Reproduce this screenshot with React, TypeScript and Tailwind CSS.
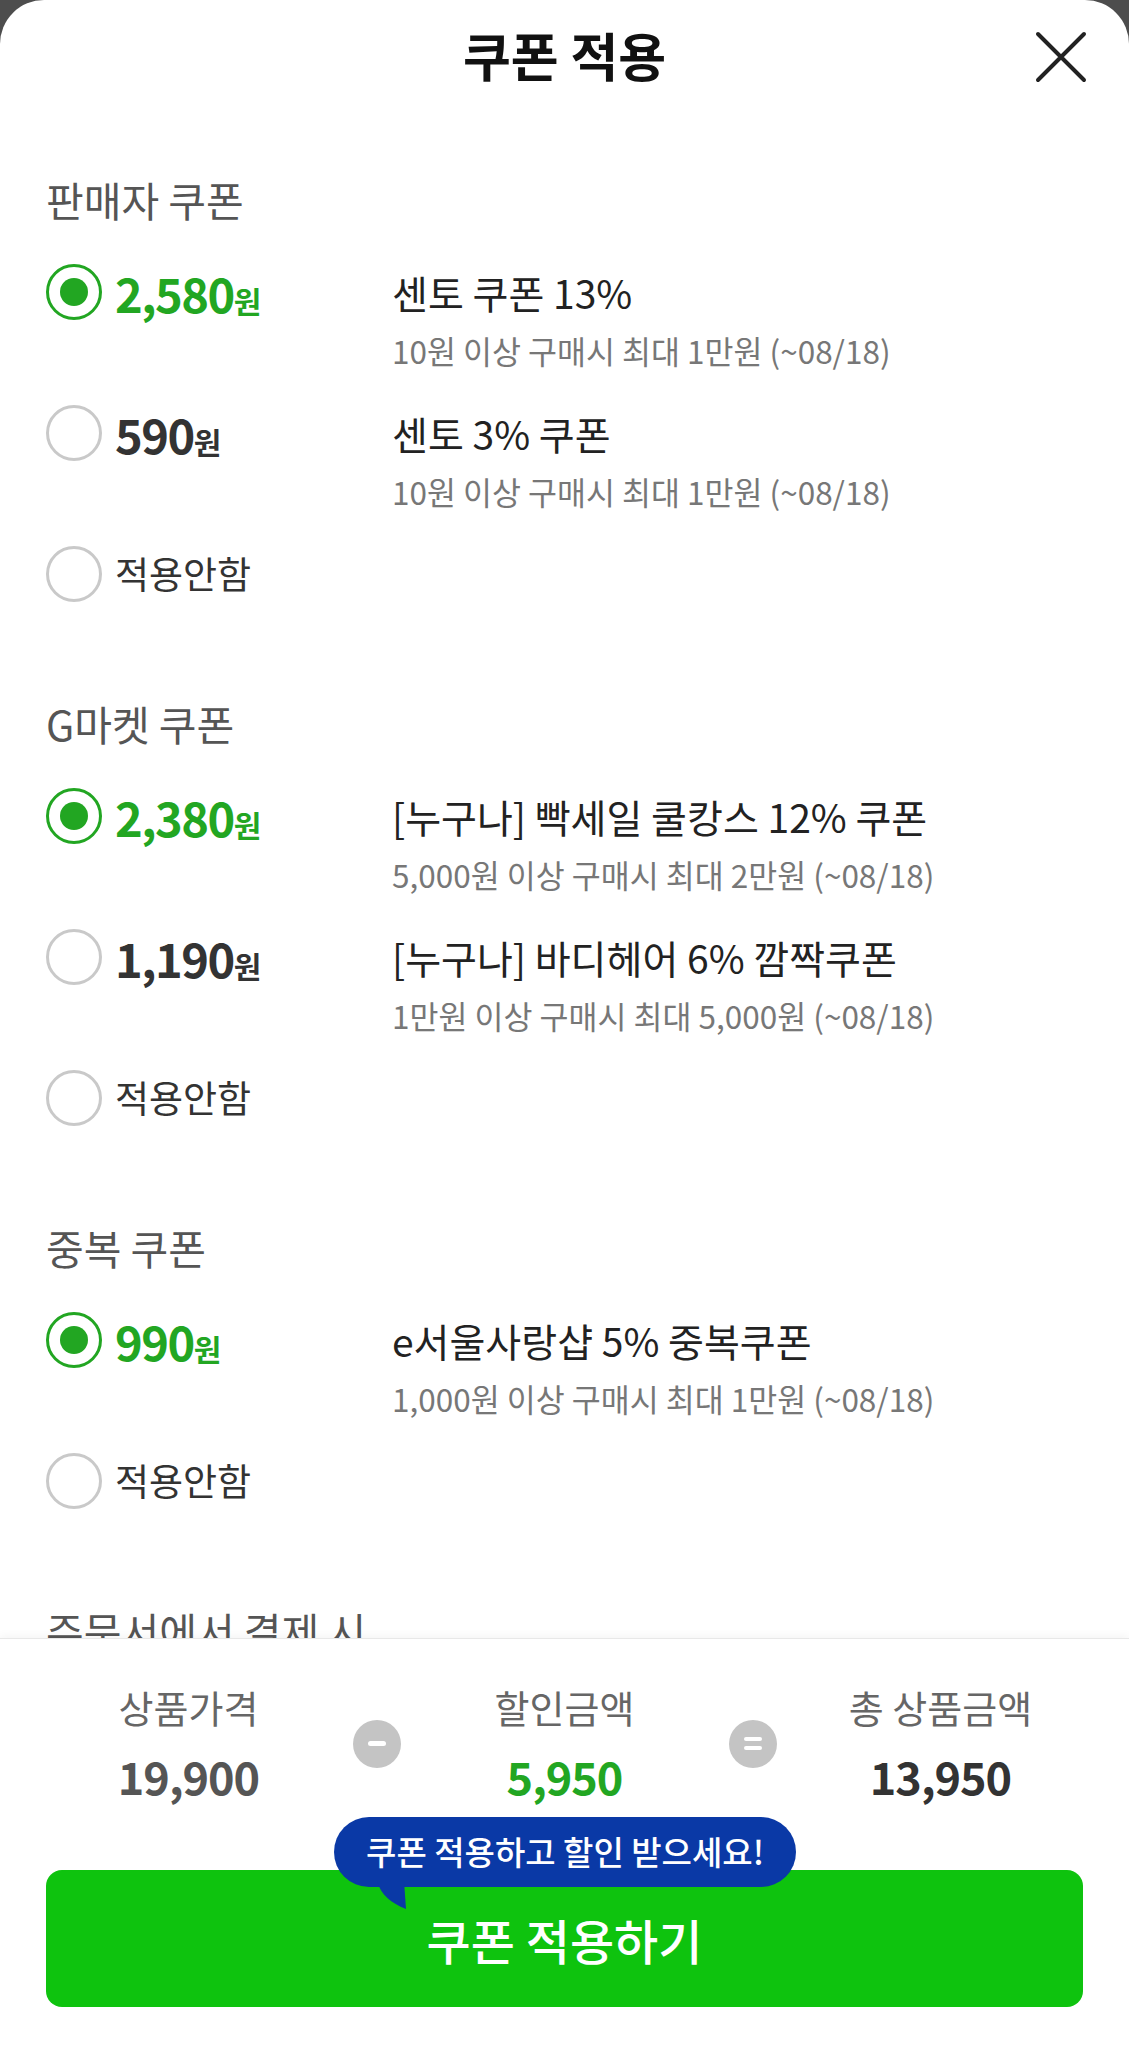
import React from "react";

interface CouponItem {
  amount: string;
  checked?: boolean;
  name: string;
  desc: string;
}

interface CouponSection {
  title: string;
  items: CouponItem[];
}

const SECTIONS: CouponSection[] = [
  {
    title: "판매자 쿠폰",
    items: [
      { amount: "2,580", checked: true, name: "센토 쿠폰 13%", desc: "10원 이상 구매시 최대 1만원 (~08/18)" },
      { amount: "590", name: "센토 3% 쿠폰", desc: "10원 이상 구매시 최대 1만원 (~08/18)" },
    ],
  },
  {
    title: "G마켓 쿠폰",
    items: [
      { amount: "2,380", checked: true, name: "[누구나] 빡세일 쿨캉스 12% 쿠폰", desc: "5,000원 이상 구매시 최대 2만원 (~08/18)" },
      { amount: "1,190", name: "[누구나] 바디헤어 6% 깜짝쿠폰", desc: "1만원 이상 구매시 최대 5,000원 (~08/18)" },
    ],
  },
  {
    title: "중복 쿠폰",
    items: [{ amount: "990", checked: true, name: "e서울사랑샵 5% 중복쿠폰", desc: "1,000원 이상 구매시 최대 1만원 (~08/18)" }],
  },
];

function Radio({ checked }: { checked?: boolean }) {
  if (checked) {
    return (
      <span className="flex h-[56px] w-[56px] shrink-0 items-center justify-center rounded-full border-[3px] border-[#22a622]">
        <span className="h-[28px] w-[28px] rounded-full bg-[#22a622]" />
      </span>
    );
  }
  return <span className="h-[56px] w-[56px] shrink-0 rounded-full border-[3px] border-[#c9c9c9]" />;
}

function CouponRow({ item }: { item: CouponItem }) {
  return (
    <div className="flex items-start">
      <div className="flex h-[60px] w-[346px] shrink-0 items-center">
        <Radio checked={item.checked} />
        <span className={`ml-[13px] flex items-baseline font-bold ${item.checked ? "text-[#22a622]" : "text-[#333]"}`}>
          <span className="text-[47px] leading-none tracking-[-1.5px]">{item.amount}</span>
          <span className="text-[30px] leading-none">원</span>
        </span>
      </div>
      <div>
        <p className="text-[39px] leading-[60px] text-[#222]">{item.name}</p>
        <p className="mt-[8px] text-[31.5px] leading-[40px] text-[#777]">{item.desc}</p>
      </div>
    </div>
  );
}

function NoneRow() {
  return (
    <div className="flex h-[60px] items-center">
      <Radio />
      <span className="ml-[13px] text-[37px] text-[#333]">적용안함</span>
    </div>
  );
}

export default function App() {
  return (
    <div className="h-[2046px] w-[1129px] bg-[#4d4d4d]">
      <div className="flex h-full flex-col overflow-hidden rounded-t-[44px] bg-white font-['Noto_Sans_CJK_KR','Noto_Sans',sans-serif]">
        <header className="relative flex h-[110px] shrink-0 items-center justify-center">
          <h1 className="text-[52px] font-bold text-[#111]">쿠폰 적용</h1>
          <button className="absolute right-[42px] top-[31px] h-[52px] w-[52px]" aria-label="닫기">
            <svg viewBox="0 0 52 52" className="h-full w-full" fill="none" stroke="#222" strokeWidth="4" strokeLinecap="round">
              <path d="M3 3 L49 49 M49 3 L3 49" />
            </svg>
          </button>
        </header>

        <main className="flex flex-1 flex-col gap-[94px] overflow-hidden px-[46px] pt-[64px]">
          {SECTIONS.map((section) => (
            <section key={section.title}>
              <h2 className="text-[41px] leading-[50px] text-[#555]">{section.title}</h2>
              <div className="mt-[38px] flex flex-col gap-[33px]">
                {section.items.map((item) => (
                  <CouponRow key={item.name} item={item} />
                ))}
                <NoneRow />
              </div>
            </section>
          ))}
          <section>
            <h2 className="text-[41px] leading-[50px] text-[#555]">주문서에서 결제 시</h2>
          </section>
        </main>

        <footer className="shrink-0 border-t border-[#e8e8e8] bg-white pb-[39px] pt-[44px] shadow-[0_-3px_8px_rgba(0,0,0,0.04)]">
          <div className="flex items-center justify-center gap-[20px]">
            <div className="w-[288px] text-center">
              <p className="text-[38px] leading-[48px] text-[#666]">상품가격</p>
              <p className="mt-[17px] text-[45px] font-bold leading-[56px] tracking-[-1px] text-[#555]">19,900</p>
            </div>
            <span className="flex h-[48px] w-[48px] items-center justify-center rounded-full bg-[#c4c4c4]">
              <span className="h-[5px] w-[18px] rounded-sm bg-white" />
            </span>
            <div className="w-[288px] text-center">
              <p className="text-[38px] leading-[48px] text-[#666]">할인금액</p>
              <p className="mt-[17px] text-[45px] font-bold leading-[56px] tracking-[-1px] text-[#22a622]">5,950</p>
            </div>
            <span className="flex h-[48px] w-[48px] flex-col items-center justify-center gap-[5px] rounded-full bg-[#c4c4c4]">
              <span className="h-[4px] w-[18px] rounded-sm bg-white" />
              <span className="h-[4px] w-[18px] rounded-sm bg-white" />
            </span>
            <div className="w-[288px] text-center">
              <p className="text-[38px] leading-[48px] text-[#666]">총 상품금액</p>
              <p className="mt-[17px] text-[45px] font-bold leading-[56px] tracking-[-1px] text-[#333]">13,950</p>
            </div>
          </div>

          <div className="relative mx-[46px] mt-[66px]">
            <button className="flex h-[137px] w-full items-center justify-center rounded-[16px] bg-[#0ec30e] text-[48px] font-medium text-white">
              쿠폰 적용하기
            </button>
            <div className="absolute left-[288px] top-[-53px] flex h-[70px] w-[462px] items-center justify-center rounded-full bg-[#0a39a6] text-[33px] font-medium text-white">
              쿠폰 적용하고 할인 받으세요!
              <svg className="absolute left-[43px] top-[64px]" width="32" height="32" viewBox="0 0 32 32">
                <path d="M0 0 C4 14 14 22 29 28 L27 0 Z" fill="#0a39a6" />
              </svg>
            </div>
          </div>
        </footer>
      </div>
    </div>
  );
}
